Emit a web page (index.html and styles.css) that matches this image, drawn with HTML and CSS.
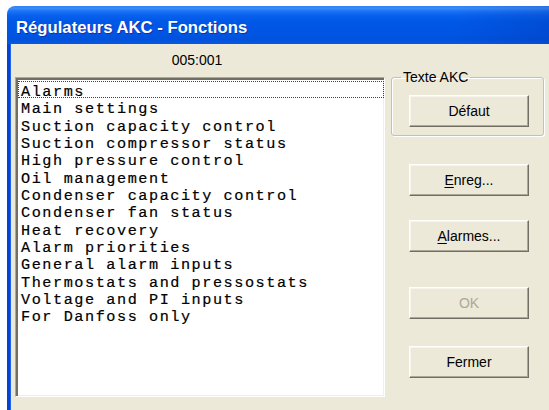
FILE: index.html
```html
<!DOCTYPE html>
<html lang="fr">
<head>
<meta charset="utf-8">
<title>Régulateurs AKC - Fonctions</title>
<link rel="stylesheet" href="styles.css">
</head>
<body>
<div class="window">
  <div class="titlebar"><span class="title">Régulateurs AKC - Fonctions</span></div>
  <div class="client">
    <div class="main">
      <div class="left">
        <div class="address">005:001</div>
        <ul class="listbox">
          <li class="item focused">Alarms</li>
          <li class="item">Main settings</li>
          <li class="item">Suction capacity control</li>
          <li class="item">Suction compressor status</li>
          <li class="item">High pressure control</li>
          <li class="item">Oil management</li>
          <li class="item">Condenser capacity control</li>
          <li class="item">Condenser fan status</li>
          <li class="item">Heat recovery</li>
          <li class="item">Alarm priorities</li>
          <li class="item">General alarm inputs</li>
          <li class="item">Thermostats and pressostats</li>
          <li class="item">Voltage and PI inputs</li>
          <li class="item">For Danfoss only</li>
        </ul>
      </div>
      <div class="side">
        <fieldset class="group">
          <legend class="group-label">Texte AKC</legend>
          <button class="btn">Défaut</button>
        </fieldset>
        <button class="btn btn-enreg"><u>E</u>nreg...</button>
        <button class="btn btn-alarmes"><u>A</u>larmes...</button>
        <button class="btn btn-ok" disabled>OK</button>
        <button class="btn btn-fermer">Fermer</button>
      </div>
    </div>
  </div>
</div>
</body>
</html>
```

FILE: styles.css
```css
html, body {
  margin: 0;
  padding: 0;
  width: 549px;
  height: 410px;
  overflow: hidden;
  background: #ffffff;
}

/* dialog frame, running off the right and bottom edges */
.window {
  margin: 6px 0 0 7px;
  width: 560px;
  height: 420px;
  border-radius: 8px 8px 0 0;
  overflow: hidden;
  display: flex;
  flex-direction: column;
}

.titlebar {
  height: 38px;
  box-sizing: border-box;
  padding: 5px 0 0 9px;
  background:
    linear-gradient(to right, rgba(0, 0, 0, 0) 80%, rgba(0, 20, 120, 0.18) 100%),
    linear-gradient(to bottom,
      #2f7ff5 0%,
      #3a8cfb 6%,
      #1a72f6 14%,
      #0862ee 24%,
      #0058e6 40%,
      #0055e3 70%,
      #0052dc 88%,
      #0a58e0 100%);
}

.title {
  font: 700 16.7px/33px "Liberation Sans", Arial, sans-serif;
  color: #ffffff;
  text-shadow: 1px 1px 0 #1032a8;
  white-space: nowrap;
}

.client {
  flex: 1;
  background: #ece9d8;
  border-left: 3px solid #0841d6;
  box-shadow: inset 1px 0 0 #1c66ee;
  padding: 7px 0 0 5px;
}

.main {
  display: flex;
  gap: 6px;
  align-items: flex-start;
}

.left {
  width: 370px;
  display: flex;
  flex-direction: column;
}

.address {
  font: 14px/18px "Liberation Sans", Arial, sans-serif;
  color: #000;
  text-align: center;
  margin: 0 0 8px -6px;
}

/* sunken list box */
.listbox {
  list-style: none;
  margin: 0;
  padding: 3px 0 0 1px;
  box-sizing: border-box;
  width: 370px;
  height: 320px;
  background: #ffffff;
  border: 1px solid;
  border-color: #aca899 #ffffff #ffffff #aca899;
  box-shadow: inset 2px 2px 0 #716f64, inset -1px -1px 0 #f1efe2;
}

/* fixed-pitch rows, 10.67px per character */
.item {
  font: 15.2px/11.33px "Liberation Mono", "Courier New", monospace;
  letter-spacing: 1.55px;
  -webkit-text-stroke: 0.2px #000;
  color: #000;
  height: 17.33px;
  box-sizing: border-box;
  padding: 6px 0 0 3px;
  margin-left: 1px;
  white-space: nowrap;
}

.item.focused {
  outline: 1px dotted #404040;
  outline-offset: -1px;
}

.side {
  width: 153px;
  padding-top: 18px;
  display: flex;
  flex-direction: column;
  align-items: flex-start;
}

/* group box around the "Défaut" button */
.group {
  margin: 0;
  width: 153px;
  box-sizing: border-box;
  border: 1px solid #c4c1b0;
  border-radius: 3px;
  box-shadow: inset 1px 1px 0 #ffffff, 1px 1px 0 #ffffff;
  padding: 10px 14px 8px 17px;
}

.group-label {
  font: 14px/16px "Liberation Sans", Arial, sans-serif;
  color: #000;
  padding: 0 2px;
  margin-left: -8px;
}

.btn {
  width: 120px;
  height: 32px;
  box-sizing: border-box;
  margin: 0 0 0 18px;
  padding: 0;
  font: 14px/16px "Liberation Sans", Arial, sans-serif;
  color: #000;
  background: #ece9d8;
  border: 1px solid;
  border-color: #ffffff #716f64 #716f64 #ffffff;
  box-shadow: inset -1px -1px 0 #aca899, inset 1px 1px 0 #f6f4ec;
  border-radius: 0;
}

.group .btn {
  margin-left: 0;
}

.btn u {
  text-decoration-thickness: 1px;
  text-underline-offset: 2px;
}

.btn:disabled {
  color: #aca899;
}

.btn-enreg { margin-top: 28px; }
.btn-alarmes { margin-top: 24px; }
.btn-ok { margin-top: 35px; }
.btn-fermer { margin-top: 27px; }
```
